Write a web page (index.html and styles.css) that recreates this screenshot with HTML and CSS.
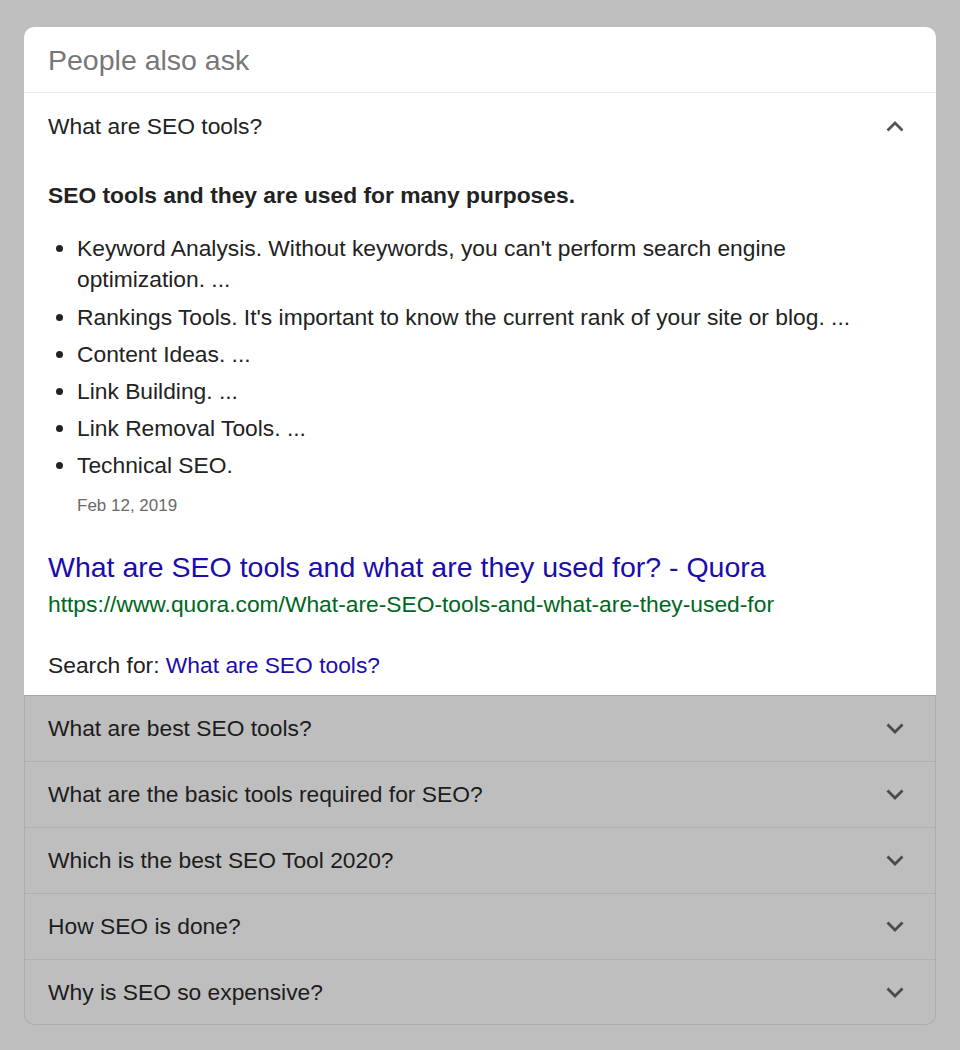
FILE: index.html
```html
<!DOCTYPE html>
<html lang="en">

<head>
    <link rel="stylesheet" href="styles.css">
</head>

<body>
    <div class="paa">
        <div class="paa-header">People also ask</div>

        <div class="question open">
            <div class="question-row">
                <span>What are SEO tools?</span>
                <svg class="chevron" width="18" height="11" viewBox="0 0 18 11">
                    <polyline points="1.5,9.5 9,2 16.5,9.5" />
                </svg>
            </div>
            <div class="answer">
                <div class="answer-title">SEO tools and they are used for many purposes.</div>
                <ul class="answer-list">
                    <li>Keyword Analysis. Without keywords, you can't perform search engine optimization. ...</li>
                    <li>Rankings Tools. It's important to know the current rank of your site or blog. ...</li>
                    <li>Content Ideas. ...</li>
                    <li>Link Building. ...</li>
                    <li>Link Removal Tools. ...</li>
                    <li>Technical SEO.</li>
                </ul>
                <div class="answer-date">Feb 12, 2019</div>
                <a class="result-title" href="#">What are SEO tools and what are they used for? - Quora</a>
                <div class="result-url">https://www.quora.com/What-are-SEO-tools-and-what-are-they-used-for</div>
                <div class="search-for">Search for: <a href="#">What are SEO tools?</a></div>
            </div>
        </div>

        <div class="closed-list">
            <div class="question-row closed">
                <span>What are best SEO tools?</span>
                <svg class="chevron" width="18" height="11" viewBox="0 0 18 11">
                    <polyline points="1.5,1.5 9,9 16.5,1.5" />
                </svg>
            </div>
            <div class="question-row closed">
                <span>What are the basic tools required for SEO?</span>
                <svg class="chevron" width="18" height="11" viewBox="0 0 18 11">
                    <polyline points="1.5,1.5 9,9 16.5,1.5" />
                </svg>
            </div>
            <div class="question-row closed">
                <span>Which is the best SEO Tool 2020?</span>
                <svg class="chevron" width="18" height="11" viewBox="0 0 18 11">
                    <polyline points="1.5,1.5 9,9 16.5,1.5" />
                </svg>
            </div>
            <div class="question-row closed">
                <span>How SEO is done?</span>
                <svg class="chevron" width="18" height="11" viewBox="0 0 18 11">
                    <polyline points="1.5,1.5 9,9 16.5,1.5" />
                </svg>
            </div>
            <div class="question-row closed">
                <span>Why is SEO so expensive?</span>
                <svg class="chevron" width="18" height="11" viewBox="0 0 18 11">
                    <polyline points="1.5,1.5 9,9 16.5,1.5" />
                </svg>
            </div>
        </div>
    </div>
</body>

</html>
```

FILE: styles.css
```css
body {
    font-family: "Liberation Sans", Arial, sans-serif;
    background-color: #bebebe;
    margin: 0;
    padding: 27px 24px;
    color: #222;
}

.paa {
    width: 912px;
}

.paa-header {
    background-color: #fff;
    border-radius: 10px 10px 0 0;
    height: 65px;
    line-height: 66px;
    padding-left: 24px;
    font-size: 28.5px;
    color: #777;
    border-bottom: 1px solid #ebebeb;
}

.question {
    background-color: #fff;
}

.question-row {
    display: flex;
    align-items: center;
    justify-content: space-between;
    height: 66px;
    padding: 0 32px 0 24px;
    font-size: 22.8px;
}

.chevron {
    fill: none;
    stroke: #555;
    stroke-width: 2.8;
}

.answer {
    padding: 21px 70px 14px 24px;
    font-size: 22.8px;
}

.answer-title {
    font-weight: bold;
    line-height: 31px;
}

.answer-list {
    margin: 22px 0 0 0;
    padding-left: 29px;
}

.answer-list li {
    line-height: 31px;
    margin-bottom: 6px;
}

.answer-list li:first-child {
    margin-bottom: 7px;
}

.answer-list li:last-child {
    margin-bottom: 0;
}

.answer-date {
    margin: 13px 0 0 29px;
    font-size: 17px;
    line-height: 24px;
    color: #6a6a6a;
}

.result-title {
    display: block;
    margin-top: 32px;
    font-size: 28.5px;
    line-height: 34px;
    color: #1a0dab;
    text-decoration: none;
}

.result-url {
    margin-top: 7px;
    font-size: 22.8px;
    line-height: 27px;
    color: #006621;
}

.search-for {
    margin-top: 32px;
    line-height: 31px;
}

.search-for a {
    color: #1a0dab;
    text-decoration: none;
}

.closed-list {
    border: 1px solid #adadad;
    border-top: 1px solid #a9a9a9;
    border-radius: 0 0 10px 10px;
}

.question-row.closed {
    height: 65px;
    padding-right: 31px;
    padding-left: 23px;
    color: #1c1c1c;
    border-bottom: 1px solid #b0b0b0;
}

.question-row.closed:last-child {
    height: 64px;
    border-bottom: none;
}

.question-row.closed .chevron {
    stroke: #4a4a4a;
}
```
